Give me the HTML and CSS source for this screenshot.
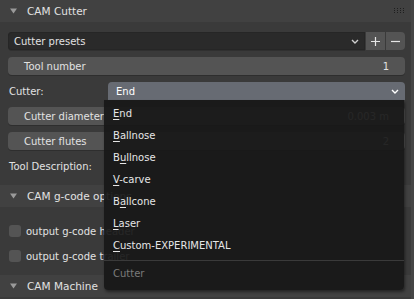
FILE: index.html
```html
<!DOCTYPE html>
<html lang="en">
<head>
    <meta charset="UTF-8">
    <title>CAM Cutter</title>
    <link rel="stylesheet" href="styles.css">
</head>
<body>
    <div class="region">
        <div class="panels">
            <div class="panel-header">
                <svg class="arrow" width="7" height="6" viewBox="0 0 7 6"><path d="M0 0.5 H7 L3.5 5.5 Z"/></svg>
                <span>CAM Cutter</span>
                <svg class="grip" width="12" height="6" viewBox="0 0 12 6">
                    <rect x="1" y="0" width="1" height="1"/><rect x="4" y="0" width="1" height="1"/><rect x="7" y="0" width="1" height="1"/><rect x="10" y="0" width="1" height="1"/>
                    <rect x="1" y="2" width="1" height="1"/><rect x="4" y="2" width="1" height="1"/><rect x="7" y="2" width="1" height="1"/><rect x="10" y="2" width="1" height="1"/>
                    <rect x="1" y="4" width="1" height="1"/><rect x="4" y="4" width="1" height="1"/><rect x="7" y="4" width="1" height="1"/><rect x="10" y="4" width="1" height="1"/>
                </svg>
            </div>
            <div class="panel-body">
                <div class="row presets">
                    <div class="field menu-field">
                        <span>Cutter presets</span>
                        <svg class="chev" width="8" height="5" viewBox="0 0 8 5"><path d="M1 1 L4 4 L7 1"/></svg>
                    </div>
                    <div class="small-btn">
                        <svg width="11" height="11" viewBox="0 0 11 11"><path d="M5.5 1 V10 M1 5.5 H10"/></svg>
                    </div>
                    <div class="small-btn last">
                        <svg width="11" height="11" viewBox="0 0 11 11"><path d="M1 5.5 H10"/></svg>
                    </div>
                </div>
                <div class="row num-btn"><span>Tool number</span><span>1</span></div>
                <div class="row prop">
                    <span class="label">Cutter:</span>
                    <div class="enum open">
                        <span>End</span>
                        <svg class="chev" width="8" height="5" viewBox="0 0 8 5"><path d="M1 1 L4 4 L7 1"/></svg>
                    </div>
                </div>
                <div class="row num-btn"><span>Cutter diameter</span><span>0.003 m</span></div>
                <div class="row num-btn"><span>Cutter flutes</span><span>2</span></div>
                <div class="row prop"><span class="label">Tool Description:</span></div>
            </div>

            <div class="panel-header">
                <svg class="arrow" width="7" height="6" viewBox="0 0 7 6"><path d="M0 0.5 H7 L3.5 5.5 Z"/></svg>
                <span>CAM g-code options</span>
            </div>
            <div class="panel-body checks">
                <div class="row check"><span class="box"></span><span>output g-code header</span></div>
                <div class="row check"><span class="box"></span><span>output g-code trailer</span></div>
            </div>

            <div class="panel-header">
                <svg class="arrow" width="7" height="6" viewBox="0 0 7 6"><path d="M0 0.5 H7 L3.5 5.5 Z"/></svg>
                <span>CAM Machine</span>
            </div>
        </div>
        <div class="scrollbar"></div>

        <div class="dropdown">
            <div class="item"><u>E</u>nd</div>
            <div class="item"><u>B</u>allnose</div>
            <div class="item">B<u>u</u>llnose</div>
            <div class="item"><u>V</u>-carve</div>
            <div class="item">B<u>a</u>llcone</div>
            <div class="item"><u>L</u>aser</div>
            <div class="item"><u>C</u>ustom-EXPERIMENTAL</div>
            <div class="sep"></div>
            <div class="title">Cutter</div>
        </div>
    </div>
</body>
</html>
```

FILE: styles.css
```css
body {
    margin: 0;
    width: 414px;
    height: 299px;
    overflow: hidden;
    background-color: #3a3a3a;
    font-family: "DejaVu Sans", "Liberation Sans", sans-serif;
    font-size: 10px;
    color: #e2e2e2;
}

.region {
    position: relative;
    display: flex;
    height: 299px;
}

.panels {
    flex: 1;
}

.scrollbar {
    width: 3px;
    background-color: #454545;
}

.panel-header {
    height: 22px;
    display: flex;
    align-items: center;
    background-color: #414141;
    padding-left: 10px;
    padding-right: 6px;
}

.panel-header .arrow {
    fill: #9a9a9a;
    margin-right: 10px;
}

.panel-header span {
    flex: 1;
    font-size: 10.5px;
}

.grip {
    fill: #1e1e1e;
}

.panel-body {
    padding: 10px 6px 10px 8px;
    display: flex;
    flex-direction: column;
    gap: 7px;
}

.panel-body.checks {
    padding-top: 15px;
    padding-bottom: 10px;
}

.row {
    height: 18px;
    display: flex;
    align-items: center;
}

.presets .field {
    flex: 1;
    height: 18px;
    display: flex;
    align-items: center;
    justify-content: space-between;
    background-color: #2a2a2a;
    border-radius: 4px 0 0 4px;
    box-shadow: inset 0 0 0 1px #262626, 0 1px 0 #303030;
    padding: 0 6px;
    box-sizing: border-box;
}

.chev {
    fill: none;
    stroke: #cfcfcf;
    stroke-width: 1.4;
}

.small-btn {
    width: 19px;
    height: 18px;
    margin-left: 1px;
    background-color: #545454;
    display: flex;
    align-items: center;
    justify-content: center;
}

.small-btn.last {
    border-radius: 0 4px 4px 0;
}

.small-btn svg {
    fill: none;
    stroke: #e6e6e6;
    stroke-width: 1.2;
}

.num-btn {
    background-color: #545454;
    border-radius: 4px;
    justify-content: space-between;
    padding: 0 16px 0 16px;
    box-shadow: 0 1px 0 #2e2e2e;
}

.label {
    width: 99px;
    padding-left: 1px;
}

.enum {
    flex: 1;
    height: 18px;
    display: flex;
    align-items: center;
    justify-content: space-between;
    padding: 0 6px 0 8px;
    background-color: #676b73;
    color: #ffffff;
    border-radius: 4px 4px 0 0;
}

.enum .chev {
    stroke: #ffffff;
}

.check .box {
    width: 12px;
    height: 12px;
    background-color: #545454;
    border-radius: 3px;
    margin-left: 1px;
    margin-right: 5px;
}

.dropdown {
    position: absolute;
    left: 104px;
    top: 100px;
    width: 300px;
    height: 190px;
    box-sizing: border-box;
    padding-top: 3px;
    background-color: rgba(24, 24, 24, 0.93);
    border-radius: 0 0 4px 4px;
    box-shadow: 1px 2px 3px rgba(0, 0, 0, 0.45);
}

.item {
    height: 22px;
    line-height: 22px;
    padding-left: 9px;
    color: #e6e6e6;
}

.item u {
    text-decoration-thickness: 1px;
    text-underline-offset: 2px;
}

.sep {
    height: 1px;
    margin-top: 3px;
    background-color: #3a3a3a;
}

.title {
    height: 26px;
    line-height: 26px;
    padding-left: 9px;
    color: #7a7a7a;
}
```
